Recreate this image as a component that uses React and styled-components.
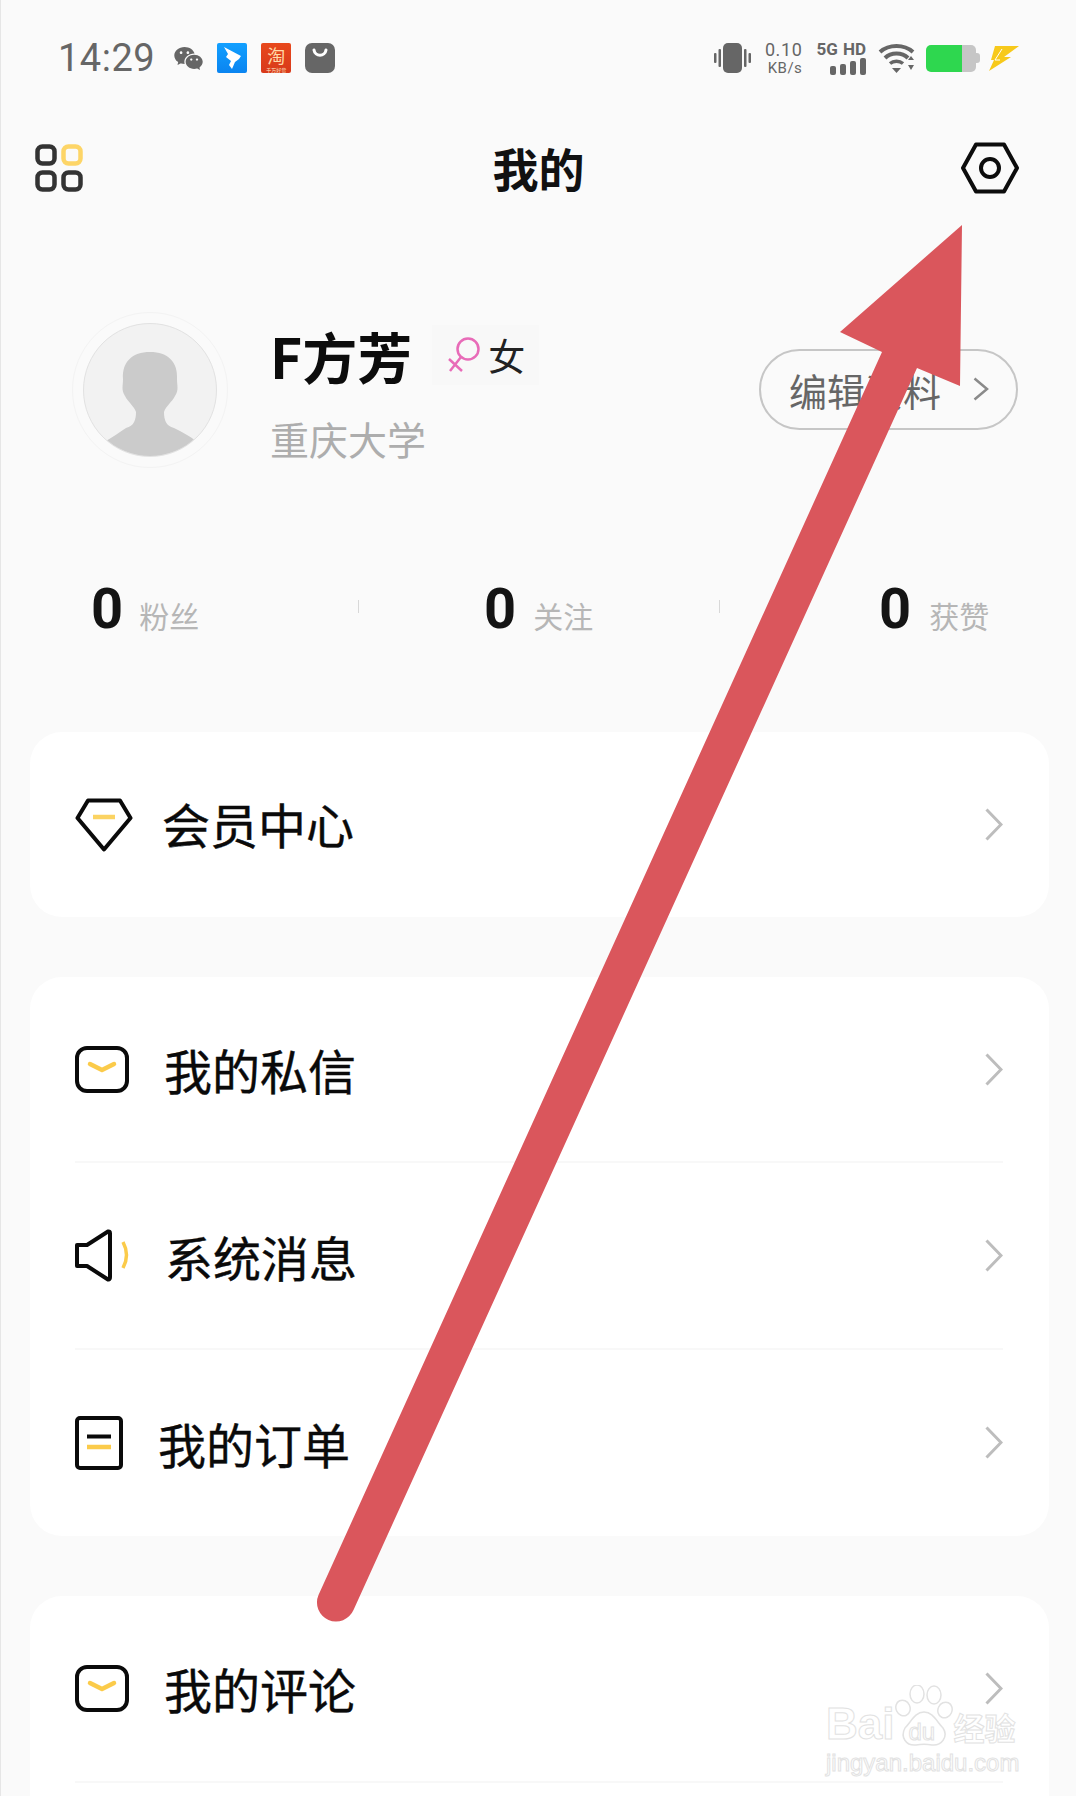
import styled, { createGlobalStyle } from 'styled-components';
import { RiWechatFill } from 'react-icons/ri';

const CJK = '"Noto Sans CJK SC", "Noto Sans", sans-serif';

const Global = createGlobalStyle`
  html, body { margin: 0; padding: 0; background: #fafafa; }
  body { font-family: ${CJK}; }
`;

const Page = styled.div`
  position: relative;
  width: 1076px;
  height: 1796px;
  overflow: hidden;
  box-sizing: border-box;
  background: #fafafa;
  border-left: 1px solid #e6e6e6;
`;

const StatusBar = styled.div`
  display: flex;
  align-items: center;
  justify-content: space-between;
  height: 116px;
  padding: 0 57px 0 57px;
`;

const StatusGroup = styled.div`
  display: flex;
  align-items: center;
`;

const Time = styled.span`
  font-family: Roboto, sans-serif;
  font-size: 38px;
  line-height: 38px;
  letter-spacing: 0.5px;
  color: #666;
  margin-right: 18px;
`;

const Wechat = styled(RiWechatFill)`
  width: 31px;
  height: 31px;
  color: #666;
  margin-right: 13px;
`;

const AppIcon = styled.div`
  display: flex;
  flex-direction: column;
  align-items: center;
  width: 30px;
  height: 30px;
  margin-right: 14px;
  border-radius: ${(p) => p.$radius || 2}px;
  background: ${(p) => p.$bg};
  overflow: hidden;
`;

const TaoChar = styled.span`
  font-size: 18px;
  line-height: 24px;
  height: 24px;
  color: #ffd9a8;
`;

const TaoStrip = styled.span`
  font-size: 5px;
  line-height: 6px;
  height: 6px;
  color: #ffe9c9;
  white-space: nowrap;
`;

const Speed = styled.div`
  display: flex;
  flex-direction: column;
  align-items: flex-end;
  gap: 2px;
  width: 40px;
  margin: 0 14px 0 11px;
  font-family: Roboto, sans-serif;
  color: #666;
`;

const SpeedValue = styled.span`
  font-size: 18px;
  line-height: 18px;
  letter-spacing: 0.6px;
`;

const SpeedUnit = styled.span`
  font-size: 15px;
  line-height: 15px;
  letter-spacing: 0.5px;
`;

const Signal = styled.div`
  display: flex;
  flex-direction: column;
  align-items: flex-end;
  margin-right: 12px;
`;

const SignalText = styled.span`
  font-family: Roboto, sans-serif;
  font-weight: 700;
  font-size: 17px;
  line-height: 17px;
  color: #666;
  word-spacing: 1px;
  white-space: nowrap;
`;

const Battery = styled.div`
  position: relative;
  width: 50px;
  height: 27px;
  margin: 0 13px 0 11px;
  border-radius: 5px;
  background: linear-gradient(to right, #2ed74f 0 72%, #c6c6c6 72% 100%);
  &::after {
    content: '';
    position: absolute;
    right: -4px;
    top: 8px;
    width: 4px;
    height: 10px;
    border-radius: 0 3px 3px 0;
    background: #c6c6c6;
  }
`;

const Nav = styled.div`
  display: grid;
  grid-template-columns: 1fr auto 1fr;
  align-items: center;
  height: 104px;
  padding: 0 34px;
`;

const NavLeft = styled.div`
  display: flex;
`;

const NavTitle = styled.h1`
  margin: -2px 0 0;
  font-size: 46px;
  line-height: 60px;
  font-weight: 700;
  color: #111;
`;

const NavRight = styled.div`
  display: flex;
  justify-content: flex-end;
  margin-right: 23px;
`;

const Profile = styled.div`
  display: flex;
  align-items: center;
  padding: 92px 58px 0 71px;
`;

const AvatarRing = styled.div`
  display: flex;
  align-items: center;
  justify-content: center;
  box-sizing: border-box;
  width: 156px;
  height: 156px;
  border-radius: 50%;
  border: 1px solid #f3f3f3;
`;

const Avatar = styled.div`
  box-sizing: border-box;
  width: 134px;
  height: 134px;
  border-radius: 50%;
  border: 1px solid #e2e2e2;
  background: #f2f2f2;
  overflow: hidden;
`;

const Info = styled.div`
  display: flex;
  flex-direction: column;
  margin-left: 42px;
  padding-top: 5px;
  flex: 1;
`;

const NameRow = styled.div`
  display: flex;
  align-items: center;
`;

const Name = styled.span`
  font-size: 55px;
  line-height: 60px;
  font-weight: 700;
  color: #0c0c0c;
`;

const Gender = styled.div`
  display: flex;
  align-items: center;
  gap: 7px;
  height: 60px;
  margin-left: 20px;
  padding: 0 14px 0 15px;
  background: #f8f8f8;
  font-size: 37px;
  color: #222;
`;

const School = styled.span`
  margin-top: 31px;
  font-size: 39px;
  line-height: 44px;
  color: #adadad;
`;

const EditButton = styled.div`
  display: flex;
  align-items: center;
  justify-content: space-between;
  box-sizing: border-box;
  width: 259px;
  height: 81px;
  margin-top: -2px;
  padding: 0 27px 0 28px;
  border: 2px solid #c6c6c6;
  border-radius: 41px;
  font-size: 38px;
  color: #666;
`;

const Stats = styled.div`
  display: flex;
  align-items: flex-end;
  height: 42px;
  margin-top: 120px;
  padding-left: 90px;
`;

const Stat = styled.div`
  display: flex;
  align-items: flex-end;
  width: ${(p) => p.$w}px;
  flex: none;
`;

const StatNumber = styled.span`
  font-family: Roboto, sans-serif;
  font-size: 56px;
  line-height: 42px;
  font-weight: 700;
  color: #141414;
`;

const StatLabel = styled.span`
  margin-left: ${(p) => p.$gap}px;
  font-size: 30px;
  line-height: 30px;
  color: #b6b6b6;
  white-space: nowrap;
`;

const StatDivider = styled.i`
  display: block;
  flex: none;
  align-self: flex-start;
  width: 1px;
  height: 13px;
  margin: 12px ${(p) => p.$r}px 0 ${(p) => p.$l}px;
  background: #d8d8d8;
`;

const Cards = styled.div`
  display: flex;
  flex-direction: column;
  gap: 60px;
  margin-top: 102px;
  padding: 0 27px 0 29px;
`;

const Card = styled.div`
  background: #fff;
  border-radius: 32px;
  padding: 0 46px 0 45px;
`;

const Row = styled.div`
  display: flex;
  align-items: center;
  box-sizing: border-box;
  height: ${(p) => p.$h || 186.4}px;
  border-bottom: ${(p) => (p.$line ? '2px solid #f8f8f8' : 'none')};
`;

const IconBox = styled.div`
  display: flex;
  align-items: center;
  width: 60px;
  flex: none;
`;

const RowLabel = styled.span`
  margin-left: ${(p) => p.$indent}px;
  margin-bottom: ${(p) => p.$up || 0}px;
  font-size: 48px;
  line-height: 60px;
  color: #0a0a0a;
  -webkit-text-stroke: 0.4px #0a0a0a;
  flex: 1;
`;

const Watermark = styled.div`
  position: absolute;
  left: 825px;
  top: 1681px;
  width: 200px;
  color: #fff;
  -webkit-text-stroke: 1px #e2e2e2;
`;

const MarkTop = styled.div`
  display: flex;
  align-items: flex-end;
  height: 66px;
`;

const MarkText = styled.span`
  font-family: "Liberation Sans", Arial, sans-serif;
  font-weight: 700;
  font-size: 44px;
  line-height: 46px;
`;

const PawBox = styled.div`
  position: relative;
  flex: none;
  width: 58px;
  height: 62px;
  margin: 0 0 0 1px;
`;

const PawDu = styled.span`
  position: absolute;
  left: 13px;
  top: 35px;
  font-family: "Liberation Sans", Arial, sans-serif;
  font-size: 24px;
  line-height: 24px;
`;

const MarkCn = styled.span`
  font-size: 31px;
  line-height: 40px;
  font-weight: 700;
  white-space: nowrap;
`;

const MarkUrl = styled.div`
  margin-top: 3px;
  font-family: "Liberation Sans", Arial, sans-serif;
  font-size: 24px;
  line-height: 26px;
  white-space: nowrap;
`;

const ArrowOverlay = styled.svg`
  position: absolute;
  left: -1px;
  top: 0;
  pointer-events: none;
`;

const Chevron = ({ w = 18, h = 33, color = '#bdbdbd', sw = 3 }) => (
  <svg width={w} height={h} viewBox={`0 0 ${w} ${h}`} fill="none">
    <path d={`M1.500 1.500 L${w - 2} ${h / 2} L1.500 ${h - 1.5}`} stroke={color} strokeWidth={sw} />
  </svg>
);

const Vibrate = () => (
  <svg width="37" height="30" viewBox="0 0 37 30" fill="#666">
    <rect x="9" y="0" width="19" height="30" rx="5" />
    <rect x="0" y="10" width="2.500" height="10" rx="1" />
    <rect x="4.500" y="6" width="2.500" height="18" rx="1" />
    <rect x="30" y="6" width="2.500" height="18" rx="1" />
    <rect x="34.500" y="10" width="2.500" height="10" rx="1" />
  </svg>
);

const Bars = () => (
  <svg width="36" height="17" viewBox="0 0 36 17" fill="#666">
    <rect x="0" y="8" width="6" height="9" rx="2" />
    <rect x="10" y="6" width="6" height="11" rx="2" />
    <rect x="20" y="3" width="6" height="14" rx="2" />
    <rect x="30" y="0" width="6" height="17" rx="2" />
  </svg>
);

const Wifi = () => (
  <svg width="37" height="30" viewBox="0 0 37 30" fill="none">
    <path d="M2 9 C11 1 26 1 35 9" stroke="#666" strokeWidth="4" />
    <path d="M7 15 C13 9 24 9 30 15" stroke="#666" strokeWidth="4" />
    <path d="M12 20.500 C15.500 17.500 21.500 17.500 25 20.500" stroke="#666" strokeWidth="3.500" />
    <path d="M14 25 L23 25 L18.500 30 Z" fill="#666" />
    <path d="M30 17 L36 17 L33 13 Z M30 22 L36 22 L33 27 Z" fill="#666" />
  </svg>
);

const Bolt = () => (
  <svg width="30" height="25" viewBox="0 0 30 25">
    <path d="M6 0 L30 0 L15 11 L22 11 L0 25 L5 14 L2 14 Z" fill="#f7c91b" />
    <path d="M13 3 L6 14 L11 14" fill="none" stroke="#fff" strokeWidth="1" />
  </svg>
);

const Wing = () => (
  <svg width="30" height="30" viewBox="0 0 30 30">
    <path d="M7 4 L24 13 L22 16 L18 19 L15 26 L12 22 L14 18 L9 14 L11 11 Z" fill="#fff" />
  </svg>
);

const Bag = () => (
  <svg width="30" height="30" viewBox="0 0 30 30" fill="none">
    <path d="M9 7 C10 14 20 14 21 7" stroke="#fff" strokeWidth="3" strokeLinecap="round" />
  </svg>
);

const GridIcon = () => (
  <svg width="49" height="48" viewBox="0 0 49 48" fill="none" strokeWidth="4.500">
    <rect x="2.500" y="2.500" width="17" height="17" rx="5" stroke="#333" />
    <rect x="28.500" y="2.500" width="17" height="17" rx="5" stroke="#fdd567" />
    <rect x="2.500" y="28.500" width="17" height="17" rx="5" stroke="#333" />
    <rect x="28.500" y="28.500" width="17" height="17" rx="5" stroke="#333" />
  </svg>
);

const HexIcon = () => (
  <svg width="58" height="52" viewBox="0 0 58 52" fill="none" stroke="#0c0c0c" strokeWidth="4" strokeLinejoin="round">
    <path d="M15 2.500 H43 L56 26 L43 49.500 H15 L2 26 Z" />
    <circle cx="29" cy="26" r="9" />
  </svg>
);

const Silhouette = () => (
  <svg width="132" height="132" viewBox="0 0 132 132">
    <path
      d="M66 28 C84 28 94 38 93 55 C93 62 95 66 91 72 C88 78 82 82 80 88 C80 96 82 102 90 104 C98 108 106 112 112 117 L120 132 L12 132 L22 117 C30 112 36 108 42 104 C50 102 52 96 52 88 C50 82 44 78 41 72 C37 66 39 62 39 55 C38 38 48 28 66 28 Z"
      fill="#cbcbcb"
    />
  </svg>
);

const Venus = () => (
  <svg width="34" height="36" viewBox="0 0 34 36" fill="none" stroke="#e86bb8" strokeWidth="2.500">
    <circle cx="21" cy="12" r="10.500" />
    <path d="M14 20 L3 34 M2 22 L15 34" />
  </svg>
);

const Diamond = () => (
  <svg width="58" height="54" viewBox="0 0 58 54" fill="none" strokeLinecap="round" strokeLinejoin="round">
    <path d="M13 2.500 H45 L55.500 20 L29 51.500 L2.500 20 Z" stroke="#0a0a0a" strokeWidth="4" />
    <path d="M18 19 H40" stroke="#fbd362" strokeWidth="4.500" strokeLinecap="butt" />
  </svg>
);

const Mail = () => (
  <svg width="54" height="47" viewBox="0 0 54 47" fill="none">
    <rect x="2" y="2" width="50" height="43" rx="10" stroke="#0a0a0a" strokeWidth="4" />
    <path d="M15 18 L27 24 L39 18" stroke="#fbcb4a" strokeWidth="4.500" strokeLinecap="round" strokeLinejoin="round" />
  </svg>
);

const Speaker = () => (
  <svg width="55" height="53" viewBox="0 0 55 53" fill="none">
    <path d="M2 16 H12 L33 2.500 Q35 2 35 4.500 V48 Q35 51 33 50.500 L12 37 H2 Z" stroke="#0a0a0a" strokeWidth="4" strokeLinejoin="round" />
    <path d="M48 13 Q55 26 48 39" stroke="#fbcb4a" strokeWidth="3.500" />
  </svg>
);

const Doc = () => (
  <svg width="48" height="54" viewBox="0 0 48 54" fill="none">
    <rect x="2" y="2" width="44" height="50" rx="3" stroke="#0a0a0a" strokeWidth="4" />
    <path d="M12 20.500 H36" stroke="#0a0a0a" strokeWidth="4" />
    <path d="M12 31 H36" stroke="#fbcb4a" strokeWidth="4.500" />
  </svg>
);

const Paw = () => (
  <svg width="58" height="62" viewBox="0 0 58 62" fill="#fff" stroke="#e2e2e2" strokeWidth="1.500">
    <ellipse cx="22" cy="9" rx="7" ry="9" />
    <ellipse cx="39" cy="10" rx="7" ry="9" />
    <ellipse cx="8" cy="23" rx="7" ry="8" transform="rotate(-25 8 23)" />
    <ellipse cx="50" cy="25" rx="7" ry="8" transform="rotate(25 50 25)" />
    <path d="M29 27 C38 27 42 37 48 43 C54 52 46 61 37 60 C31 59 27 59 21 60 C11 61 5 52 10 43 C16 37 20 27 29 27 Z" />
  </svg>
);

const rows = [
  [{ icon: <Diamond />, label: '会员中心', indent: 27, h: 185, up: 3 }],
  [
    { icon: <Mail />, label: '我的私信', indent: 29, line: true },
    { icon: <Speaker />, label: '系统消息', indent: 30, line: true },
    { icon: <Doc />, label: '我的订单', indent: 23 },
  ],
  [
    { icon: <Mail />, label: '我的评论', indent: 29, line: true },
    { label: '', indent: 29 },
  ],
];

export default function App() {
  return (
    <Page>
      <Global />
      <StatusBar>
        <StatusGroup>
          <Time>14:29</Time>
          <Wechat />
          <AppIcon $bg="linear-gradient(#12a0ff, #0a84f0)"><Wing /></AppIcon>
          <AppIcon $bg="linear-gradient(#e8481c, #d8391a)">
            <TaoChar>淘</TaoChar>
            <TaoStrip>千万好货</TaoStrip>
          </AppIcon>
          <AppIcon $bg="#666" $radius={7}><Bag /></AppIcon>
        </StatusGroup>
        <StatusGroup>
          <Vibrate />
          <Speed>
            <SpeedValue>0.10</SpeedValue>
            <SpeedUnit>KB/s</SpeedUnit>
          </Speed>
          <Signal>
            <SignalText>5G HD</SignalText>
            <Bars />
          </Signal>
          <Wifi />
          <Battery />
          <Bolt />
        </StatusGroup>
      </StatusBar>

      <Nav>
        <NavLeft><GridIcon /></NavLeft>
        <NavTitle>我的</NavTitle>
        <NavRight><HexIcon /></NavRight>
      </Nav>

      <Profile>
        <AvatarRing>
          <Avatar><Silhouette /></Avatar>
        </AvatarRing>
        <Info>
          <NameRow>
            <Name>F方芳</Name>
            <Gender><Venus />女</Gender>
          </NameRow>
          <School>重庆大学</School>
        </Info>
        <EditButton>
          编辑资料
          <Chevron w={16} h={24} color="#8a8a8a" sw={2.5} />
        </EditButton>
      </Profile>

      <Stats>
        <Stat $w={107}><StatNumber>0</StatNumber><StatLabel $gap={16}>粉丝</StatLabel></Stat>
        <StatDivider $l={160} $r={125} />
        <Stat $w={106}><StatNumber>0</StatNumber><StatLabel $gap={17}>关注</StatLabel></Stat>
        <StatDivider $l={129} $r={159} />
        <Stat $w={107}><StatNumber>0</StatNumber><StatLabel $gap={18}>获赞</StatLabel></Stat>
      </Stats>

      <Cards>
        {rows.map((card, i) => (
          <Card key={i}>
            {card.map((row, j) => (
              <Row key={j} $h={row.h} $line={row.line}>
                <IconBox>{row.icon}</IconBox>
                <RowLabel $indent={row.indent} $up={row.up}>{row.label}</RowLabel>
                {row.label && <Chevron />}
              </Row>
            ))}
          </Card>
        ))}
      </Cards>

      <Watermark>
        <MarkTop>
          <MarkText>Bai</MarkText>
          <PawBox>
            <Paw />
            <PawDu>du</PawDu>
          </PawBox>
          <MarkCn>经验</MarkCn>
        </MarkTop>
        <MarkUrl>jingyan.baidu.com</MarkUrl>
      </Watermark>

      <ArrowOverlay width="1076" height="1796" viewBox="0 0 1076 1796">
        <path
          d="M962 225 L960 386 L917 368 L353.500 1610 A19 19 0 0 1 318.500 1595 L882 352 L840 332 Z"
          fill="#da565c"
        />
      </ArrowOverlay>
    </Page>
  );
}
